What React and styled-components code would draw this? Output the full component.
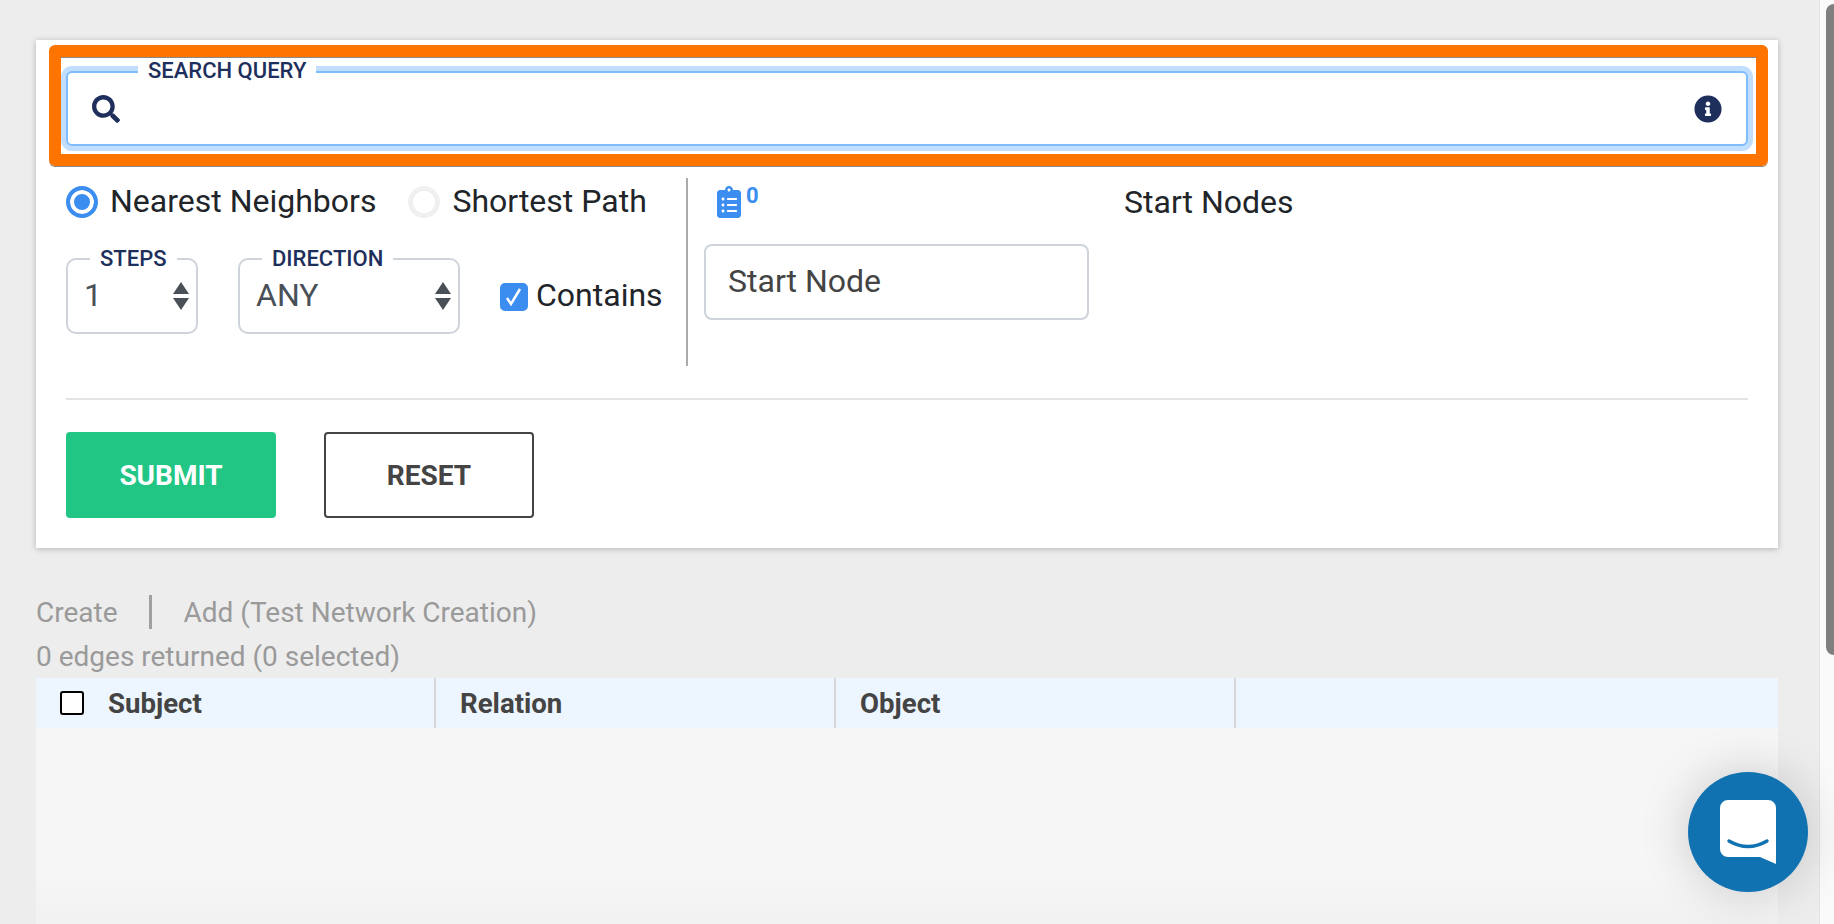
import React from 'react'
import styled, { createGlobalStyle } from 'styled-components'
import { FaSearch, FaInfoCircle, FaClipboardList } from 'react-icons/fa'

const GlobalStyle = createGlobalStyle`
  html, body {
    margin: 0;
    padding: 0;
    height: 100%;
    overflow: hidden;
    background: #ededed;
    font-family: Roboto, "Liberation Sans", sans-serif;
  }
  * {
    box-sizing: border-box;
  }
`

const Page = styled.div`
  display: flex;
  height: 924px;
  overflow: hidden;
`

const Main = styled.main`
  flex: 1;
  display: flex;
  flex-direction: column;
  padding: 40px 41px 0 36px;
  border-right: 1px solid #e4e4e4;
`

const ScrollTrack = styled.div`
  width: 14px;
  background: #fafafa;
  padding: 4px 0 0 6px;
`

const ScrollThumb = styled.div`
  height: 651px;
  border-radius: 8px 0 0 8px;
  background: #7f7f7f;
`

const Card = styled.section`
  background: #fff;
  box-shadow: 0 1px 6px rgba(0, 0, 0, 0.25);
  padding: 5px 10px 30px 13px;
`

const Highlight = styled.div`
  border: 12px solid #ff7300;
  border-radius: 6px;
  padding: 14px 8px 8px 5px;
  box-shadow: 0 1px 0 #8a8a8a, inset 0 1px 0 #8a8a8a;
`

const SearchBox = styled.div`
  position: relative;
  height: 75px;
  display: flex;
  align-items: center;
  padding: 0 24px;
  background: #fff;
  border: 2px solid #80bdff;
  border-radius: 6px;
  box-shadow: 0 0 0 5px #c1defe;
`

const SearchLabel = styled.label`
  position: absolute;
  left: 70px;
  top: -14px;
  padding: 0 10px;
  background: #fff;
  color: #1e2f5c;
  font-size: 22px;
  font-weight: 500;
  line-height: 24px;
`

const SearchInput = styled.input`
  flex: 1;
  border: 0;
  outline: 0;
  background: transparent;
  font-size: 28px;
`

const NavyIcon = styled.span`
  display: flex;
  color: #1e2f5c;
  font-size: ${p => p.$size}px;
`

const Options = styled.div`
  display: flex;
  margin: 12px 0 0 17px;
`

const LeftColumn = styled.div`
  width: 622px;
  height: 188px;
  padding-top: 8px;
  border-right: 2px solid #aaa;
`

const RadioRow = styled.div`
  display: flex;
  align-items: center;
  height: 32px;
`

const RadioItem = styled.label`
  display: flex;
  align-items: center;
  gap: 12px;
  margin-right: 32px;
  color: #212529;
  font-size: 32px;
`

const RadioText = styled.span`
  padding-bottom: 2px;
`

const Radio = styled.span`
  width: 32px;
  height: 32px;
  border-radius: 50%;
  background: ${p => (p.$on ? '#3b8eef' : '#fff')};
  border: ${p => (p.$on ? '4px solid #3b8eef' : '5px solid #f0f0f0')};
  box-shadow: ${p => (p.$on ? 'inset 0 0 0 4px #fff' : 'none')};
`

const SelectRow = styled.div`
  display: flex;
  align-items: center;
  margin-top: 40px;
`

const SelectBox = styled.div`
  position: relative;
  width: ${p => p.$width}px;
  height: 76px;
  margin-right: ${p => p.$gap}px;
  padding: 15px 0 0 ${p => p.$pad}px;
  border: 2px solid #ced4da;
  border-radius: 10px;
  color: #495057;
  font-size: 32px;
  line-height: 40px;
`

const SelectLabel = styled.span`
  position: absolute;
  left: ${p => p.$left}px;
  top: -13px;
  padding: 0 10px;
  background: #fff;
  color: #1e2f5c;
  font-size: 22px;
  font-weight: 500;
  line-height: 24px;
`

const Arrows = styled.span`
  position: absolute;
  right: 7px;
  top: 22px;
  display: flex;
  flex-direction: column;
  gap: 4px;
`

const Arrow = styled.span`
  width: 0;
  height: 0;
  border-left: 8px solid transparent;
  border-right: 8px solid transparent;
  border-bottom: ${p => (p.$down ? '0' : '12px solid #495057')};
  border-top: ${p => (p.$down ? '12px solid #495057' : '0')};
`

const CheckItem = styled.label`
  display: flex;
  align-items: center;
  gap: 8px;
  color: #212529;
  font-size: 32px;
`

const CheckBox = styled.span`
  display: flex;
  align-items: center;
  justify-content: center;
  width: 28px;
  height: 28px;
  margin-top: 2px;
  border-radius: 5px;
  background: #3b8eef;
`

const NodeColumn = styled.div`
  width: 385px;
  margin-left: 16px;
  padding-top: 8px;
`

const ListCount = styled.div`
  display: flex;
  height: 32px;
  margin: 0 0 26px 9px;
  color: #3b8eef;
  font-size: 32px;
`

const CountBadge = styled.span`
  margin-left: 1px;
  font-size: 22px;
  font-weight: 700;
  line-height: 20px;
`

const NodeInput = styled.input`
  display: block;
  width: 100%;
  height: 76px;
  padding: 0 22px 2px;
  border: 2px solid #ced4da;
  border-radius: 8px;
  outline: 0;
  font-family: inherit;
  font-size: 32px;

  &::placeholder {
    color: #444;
    opacity: 1;
  }
`

const NodesTitle = styled.div`
  margin: 5px 0 0 35px;
  color: #212529;
  font-size: 32px;
  line-height: 38px;
`

const Rule = styled.hr`
  height: 2px;
  margin: 32px 20px 32px 17px;
  border: 0;
  background: #e3e3e3;
`

const ButtonRow = styled.div`
  display: flex;
  gap: 48px;
  margin-left: 17px;
`

const Button = styled.button`
  width: 210px;
  height: 86px;
  border: 2px solid ${p => (p.$primary ? '#21c685' : '#444')};
  border-radius: 4px;
  background: ${p => (p.$primary ? '#21c685' : '#fff')};
  color: ${p => (p.$primary ? '#fff' : '#444')};
  font-family: inherit;
  font-size: 28px;
  font-weight: 700;
`

const TabRow = styled.div`
  display: flex;
  align-items: center;
  height: 36px;
  margin-top: 46px;
  color: #9a9a9a;
  font-size: 28px;
`

const TabDivider = styled.span`
  width: 3px;
  height: 34px;
  margin: 0 32px 0 31px;
  background: #a0a0a0;
`

const EdgeCount = styled.div`
  margin-top: 9px;
  height: 36px;
  color: #9a9a9a;
  font-size: 28px;
  line-height: 36px;
`

const TableHead = styled.div`
  display: flex;
  flex: none;
  height: 50px;
  margin-top: 3px;
  background: #edf5fe;
`

const HeadCell = styled.div`
  display: flex;
  align-items: center;
  gap: 24px;
  width: 400px;
  padding-left: ${p => p.$pad}px;
  border-right: 2px solid #d6d6d6;
  color: #444;
  font-size: 27.6px;
  font-weight: 700;

  &:last-child {
    flex: 1;
    border-right: 0;
  }
`

const RowCheck = styled.span`
  width: 24px;
  height: 24px;
  border: 2px solid #000;
  border-radius: 3px;
  background: #fff;
`

const TableBody = styled.div`
  flex: 1;
  background: linear-gradient(#f6f6f6 75%, #f1f1f1);
`

const Launcher = styled.button`
  position: absolute;
  left: 1688px;
  top: 772px;
  display: flex;
  align-items: center;
  justify-content: center;
  width: 120px;
  height: 120px;
  padding: 0;
  border: 0;
  border-radius: 50%;
  background: #1072b1;
  box-shadow: 0 0 50px rgba(0, 0, 0, 0.18);
`

export default function App() {
  return (
    <Page>
      <GlobalStyle />
      <Main>
        <Card>
          <Highlight>
            <SearchBox>
              <SearchLabel>SEARCH QUERY</SearchLabel>
              <NavyIcon $size={28}><FaSearch /></NavyIcon>
              <SearchInput />
              <NavyIcon $size={28}><FaInfoCircle /></NavyIcon>
            </SearchBox>
          </Highlight>

          <Options>
            <LeftColumn>
              <RadioRow>
                <RadioItem><Radio $on /><RadioText>Nearest Neighbors</RadioText></RadioItem>
                <RadioItem><Radio /><RadioText>Shortest Path</RadioText></RadioItem>
              </RadioRow>
              <SelectRow>
                <SelectBox $width={132} $gap={40} $pad={16}>
                  <SelectLabel $left={22}>STEPS</SelectLabel>
                  1
                  <Arrows><Arrow /><Arrow $down /></Arrows>
                </SelectBox>
                <SelectBox $width={222} $gap={40} $pad={16}>
                  <SelectLabel $left={22}>DIRECTION</SelectLabel>
                  ANY
                  <Arrows><Arrow /><Arrow $down /></Arrows>
                </SelectBox>
                <CheckItem>
                  <CheckBox>
                    <svg width="20" height="20" viewBox="0 0 20 20">
                      <path d="M3 11l4 6 9-15" fill="none" stroke="#fff" strokeWidth="2.5" />
                    </svg>
                  </CheckBox>
                  <RadioText>Contains</RadioText>
                </CheckItem>
              </SelectRow>
            </LeftColumn>
            <NodeColumn>
              <ListCount>
                <FaClipboardList />
                <CountBadge>0</CountBadge>
              </ListCount>
              <NodeInput placeholder="Start Node" />
            </NodeColumn>
            <NodesTitle>Start Nodes</NodesTitle>
          </Options>

          <Rule />

          <ButtonRow>
            <Button $primary>SUBMIT</Button>
            <Button>RESET</Button>
          </ButtonRow>
        </Card>

        <TabRow>
          Create
          <TabDivider />
          Add (Test Network Creation)
        </TabRow>
        <EdgeCount>0 edges returned (0 selected)</EdgeCount>

        <TableHead>
          <HeadCell $pad={24}><RowCheck />Subject</HeadCell>
          <HeadCell $pad={24}>Relation</HeadCell>
          <HeadCell $pad={24}>Object</HeadCell>
          <HeadCell />
        </TableHead>
        <TableBody />
      </Main>
      <ScrollTrack><ScrollThumb /></ScrollTrack>

      <Launcher aria-label="Chat">
        <svg width="56" height="64" viewBox="0 0 56 64">
          <path d="M8 0h40a8 8 0 0 1 8 8v56l-16-7H8a8 8 0 0 1-8-8V8a8 8 0 0 1 8-8z" fill="#fff" />
          <path d="M9 41q19 11 38 0" fill="none" stroke="#1072b1" strokeWidth="3.5" strokeLinecap="round" />
        </svg>
      </Launcher>
    </Page>
  )
}
